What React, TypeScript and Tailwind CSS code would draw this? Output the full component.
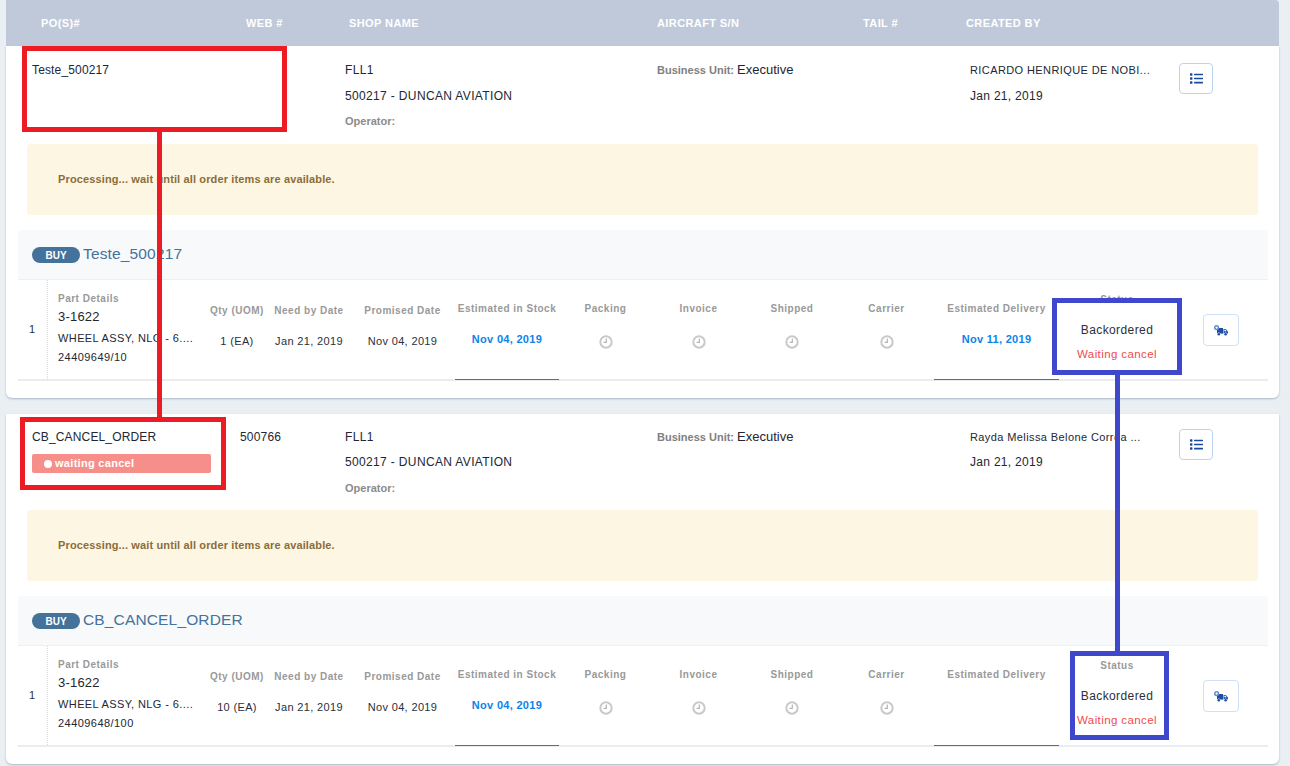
import React from 'react';
import { FaList } from 'react-icons/fa';

const ClockIcon = () => (
  <svg width="14" height="14" viewBox="0 0 14 14" fill="none" stroke="#c9c9c9" className="mx-auto">
    <circle cx="7" cy="7" r="5.7" strokeWidth="2" />
    <path d="M7.3 3.6v3.8H4.6" strokeWidth="1.2" stroke="#b4b4b4" />
  </svg>
);

const TruckIcon = () => (
  <svg width="14" height="11" viewBox="0 0 14 11" fill="#1e4e9c">
    <path d="M3 3h6v5.6H3z" />
    <path d="M9.5 4h2.3L14 6.4v2.2H9.5z" />
    <path d="M10.4 4.8h1.2l1.1 1.5h-2.3z" fill="#ffffff" />
    <circle cx="4.8" cy="9.2" r="1.7" fill="#ffffff" />
    <circle cx="4.8" cy="9.2" r="1.3" />
    <circle cx="11.6" cy="9.2" r="1.7" fill="#ffffff" />
    <circle cx="11.6" cy="9.2" r="1.3" />
    <circle cx="2.6" cy="2.6" r="2.6" fill="#5f8fd4" />
    <circle cx="2.6" cy="2.6" r="1.1" fill="#ffffff" />
  </svg>
);

const ListButton = ({ first }: { first?: boolean }) => (
  <button className={`w-[34px] h-[31px] rounded-[4px] border border-[#b9d3f5] bg-white flex items-center justify-center ${first ? '' : '-mt-[1px]'}`}>
    <FaList className="text-[#1a4a9c] w-[13px] h-[13px]" />
  </button>
);

const TruckButton = () => (
  <button className="w-[36px] h-[32px] rounded-[4px] border border-[#cfe0f7] bg-white flex items-center justify-center">
    <TruckIcon />
  </button>
);

const headCls = 'text-[10px] leading-[12px] font-bold text-[#999999] tracking-[0.5px] whitespace-nowrap';

function Centered({ w, label, value }: { w: string; label: string; value: string }) {
  return (
    <div className={`${w} shrink-0 text-center pt-[25px]`}>
      <div className={headCls}>{label}</div>
      <div className="mt-[18px] text-[11px] leading-[13px] text-[#2a2f3a] tracking-[0.35px] whitespace-nowrap">{value}</div>
    </div>
  );
}

function Pending({ w, label }: { w: string; label: string }) {
  return (
    <div className={`${w} shrink-0 text-center pt-[23px]`}>
      <div className={headCls}>{label}</div>
      <div className="mt-[20px]"><ClockIcon /></div>
    </div>
  );
}

function Stock({ w, label, value }: { w: string; label: string; value?: string }) {
  return (
    <div className={`${w} shrink-0 text-center pt-[23px] h-[100px] border-b border-[#1a7fe0]`}>
      <div className={headCls}>{label}</div>
      <div className="mt-[18px] h-[13px] text-[11px] leading-[13px] font-bold text-[#0d84ea] tracking-[0.3px] whitespace-nowrap">{value}</div>
    </div>
  );
}

type Order = {
  po: string;
  web?: string;
  waiting?: boolean;
  creator: string;
  qty: string;
  partNo: string;
  delivery?: string;
};

function OrderCard({ order, first }: { order: Order; first?: boolean }) {
  return (
    <section className={`bg-white rounded-b-[6px] shadow-[0_1px_2px_rgba(120,140,170,0.55)] ${first ? 'h-[352px]' : 'h-[350px]'}`}>
      <div className={`flex ${first ? 'h-[98px] pt-[17px]' : 'h-[96px] pt-[16px]'} text-[#222733] text-[12px]`}>
        <div className="w-[208px] ml-[26px] shrink-0 tracking-[0.15px]">
          <div className="leading-[14px]">{order.po}</div>
          {order.waiting && (
            <div className="mt-[10px] w-[179px] h-[19px] rounded-[2px] bg-[#f68f8a] flex items-center pl-[12px] gap-[3px] text-white text-[11px] font-bold tracking-[0.3px]">
              <span className="w-[8px] h-[8px] rounded-full bg-white" />
              waiting cancel
            </div>
          )}
        </div>
        <div className="w-[105px] shrink-0 leading-[14px] tracking-[0.2px]">{order.web}</div>
        <div className="w-[312px] shrink-0 tracking-[0.35px]">
          <div className="leading-[14px]">FLL1</div>
          <div className={`leading-[14px] ${first ? 'mt-[12px]' : 'mt-[11px]'}`}>500217 - DUNCAN AVIATION</div>
          <div className={`leading-[14px] ${first ? 'mt-[11px]' : 'mt-[12px]'} text-[11px] font-bold tracking-normal text-[#8b8b8b]`}>Operator:</div>
        </div>
        <div className="w-[313px] shrink-0 leading-[14px]">
          <span className="text-[11px] font-bold text-[#808080]">Business Unit: </span>
          <span className="text-[13px]">Executive</span>
        </div>
        <div className="w-[209px] shrink-0 text-[11px] tracking-[0.4px]">
          <div className="leading-[14px] whitespace-nowrap">{order.creator}</div>
          <div className={`leading-[14px] ${first ? 'mt-[12px]' : 'mt-[11px]'} text-[12px] tracking-[0.3px]`}>Jan 21, 2019</div>
        </div>
        <ListButton first={first} />
      </div>

      <div className="mx-[21px] w-[1231px] h-[71px] rounded-[3px] bg-[#fdf6e3] flex items-center pl-[31px] text-[11px] font-bold text-[#8a6d3b] tracking-[0.13px]">
        Processing... wait until all order items are available.
      </div>

      <div className="mx-[12px] mt-[15px] w-[1250px]">
        <div className="h-[50px] rounded-t-[3px] bg-[#f7f9fb] border-b border-[#eceff3] flex items-center pl-[14px] gap-[3px]">
          <span className="w-[48px] h-[16px] pt-[1px] rounded-full bg-[#44729b] text-white text-[10px] font-bold flex items-center justify-center">BUY</span>
          <span className="mb-[2px] text-[15.5px] text-[#44729b] tracking-[0.15px]">{order.po}</span>
        </div>
        <div className="flex h-[101px] border-b-2 border-[#e9edf2]">
          <div className="w-[30px] shrink-0 border-r border-dotted border-[#d6dbe2] text-[11px] text-[#2a2f3a] flex items-center pl-[11px]">1</div>
          <div className="w-[158px] shrink-0 pl-[10px] pt-[13px]">
            <div className={headCls}>Part Details</div>
            <div className="mt-[4px] text-[13px] text-[#222733] leading-[16px] tracking-[0.2px]">3-1622</div>
            <div className="mt-[6px] text-[11px] text-[#222733] leading-[14px] tracking-[0.4px] whitespace-nowrap">WHEEL ASSY, NLG - 6....</div>
            <div className="mt-[5px] text-[11px] text-[#222733] leading-[14px] tracking-[0.45px]">{order.partNo}</div>
          </div>
          <Centered w="w-[62px]" label="Qty (UOM)" value={order.qty} />
          <Centered w="w-[82px]" label="Need by Date" value="Jan 21, 2019" />
          <Centered w="w-[105px]" label="Promised Date" value="Nov 04, 2019" />
          <Stock w="w-[104px]" label="Estimated in Stock" value="Nov 04, 2019" />
          <Pending w="w-[93px]" label="Packing" />
          <Pending w="w-[93px]" label="Invoice" />
          <Pending w="w-[94px]" label="Shipped" />
          <Pending w="w-[95px]" label="Carrier" />
          <Stock w="w-[125px]" label="Estimated Delivery" value={order.delivery} />
          <div className="w-[116px] shrink-0 text-center pt-[14px]">
            <div className={headCls}>Status</div>
            <div className="mt-[17px] text-[12px] leading-[14px] text-[#2a2f3a] tracking-[0.4px]">Backordered</div>
            <div className="mt-[10px] text-[11.5px] leading-[14px] text-[#f04b4b] tracking-[0.4px]">Waiting cancel</div>
          </div>
          <div className="pl-[28px] pt-[34px]"><TruckButton /></div>
        </div>
      </div>
    </section>
  );
}

export default function App() {
  const orders: Order[] = [
    { po: 'Teste_500217', creator: 'RICARDO HENRIQUE DE NOBI...', qty: '1 (EA)', partNo: '24409649/10', delivery: 'Nov 11, 2019' },
    { po: 'CB_CANCEL_ORDER', web: '500766', waiting: true, creator: 'Rayda Melissa Belone Correa ...', qty: '10 (EA)', partNo: '24409648/100' },
  ];

  return (
    <div className='relative h-[766px] w-[1290px] overflow-hidden bg-[#e9eff3] font-["Liberation_Sans",Arial,sans-serif]'>
      <div className="ml-[6px] w-[1273px]">
        <div className="h-[46px] rounded-tr-[4px] bg-[#bfc9da] flex items-center text-white text-[11px] font-bold tracking-[0.4px]">
          <span className="ml-[35px] w-[205px]">PO(S)#</span>
          <span className="w-[103px]">WEB #</span>
          <span className="w-[308px]">SHOP NAME</span>
          <span className="w-[206px]">AIRCRAFT S/N</span>
          <span className="w-[103px]">TAIL #</span>
          <span>CREATED BY</span>
        </div>
        <OrderCard order={orders[0]} first />
        <div className="h-[16px]" />
        <OrderCard order={orders[1]} />
      </div>

      {/* annotations drawn over the screenshot */}
      <div className="absolute left-[22px] top-[46px] w-[265px] h-[86px] border-[5px] border-[#ed1c24]" />
      <div className="absolute left-[157px] top-[132px] w-[5px] h-[286px] bg-[#ed1c24]" />
      <div className="absolute left-[20px] top-[417px] w-[206px] h-[73px] border-[5px] border-[#ed1c24]" />
      <div className="absolute left-[1052px] top-[298px] w-[130px] h-[77px] border-[5px] border-[#3f48cc]" />
      <div className="absolute left-[1115px] top-[375px] w-[5px] h-[277px] bg-[#3f48cc]" />
      <div className="absolute left-[1070px] top-[651px] w-[99px] h-[89px] border-[5px] border-[#3f48cc]" />
    </div>
  );
}
